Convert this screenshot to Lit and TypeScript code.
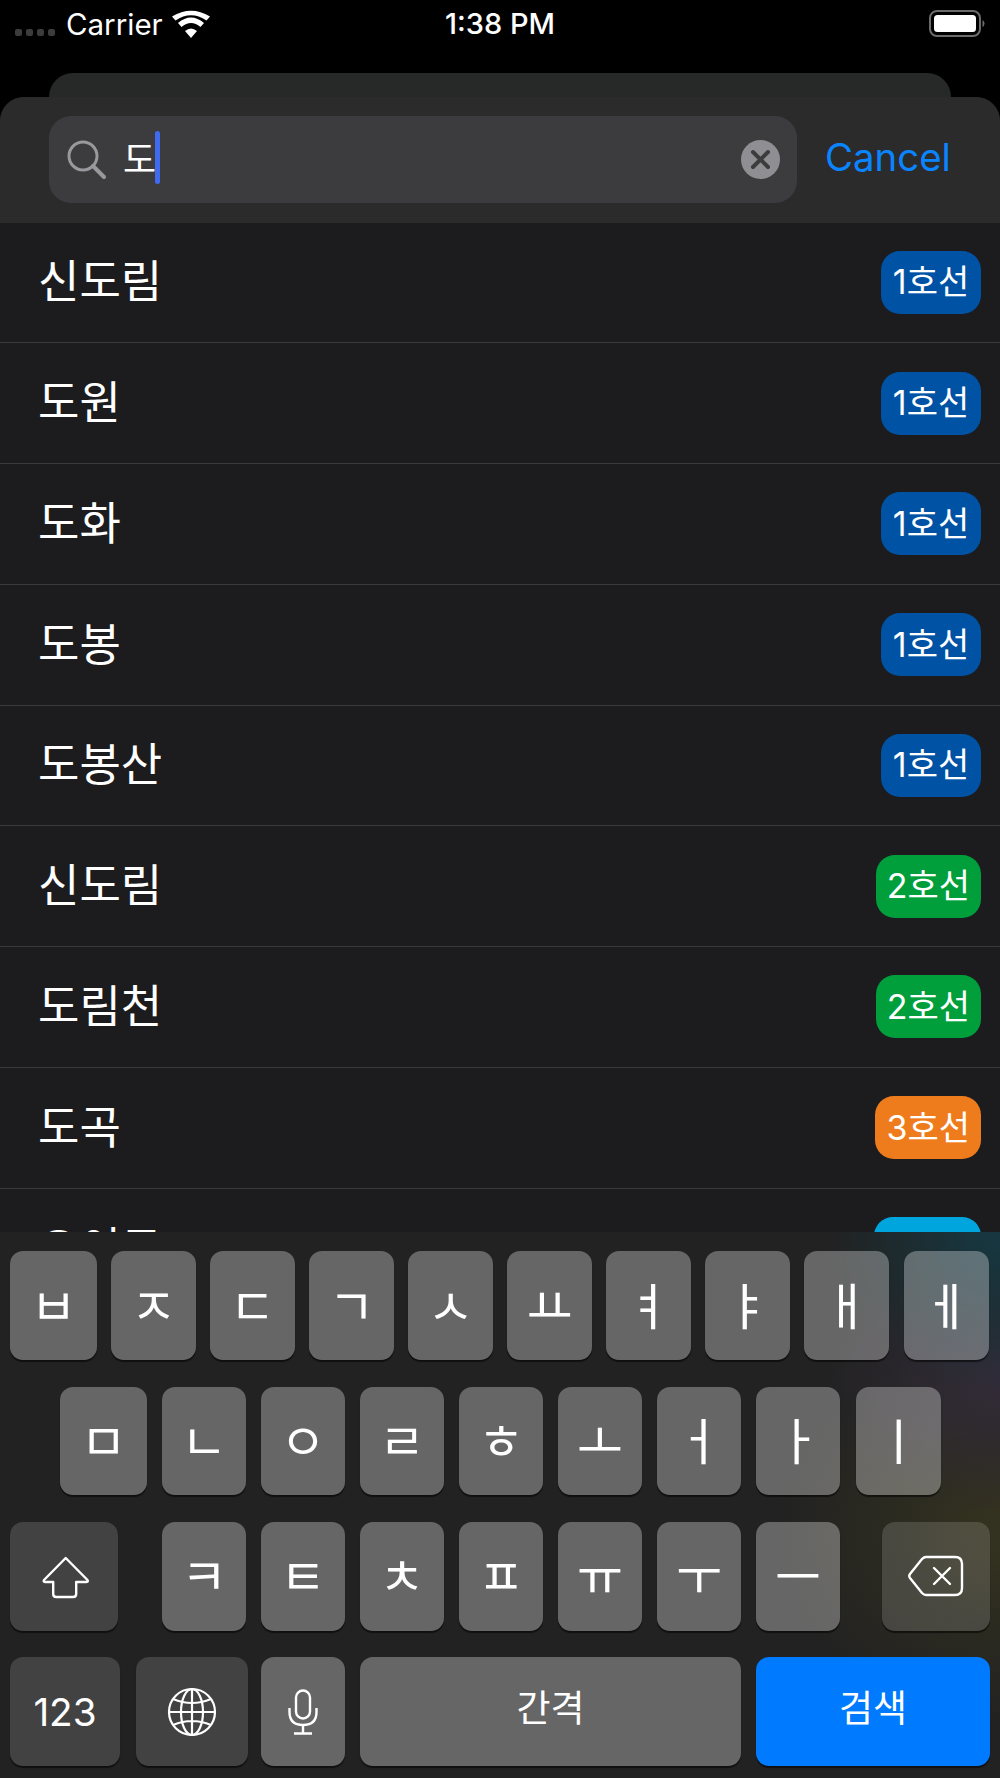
import { LitElement, html, css, svg } from "lit";
import { customElement } from "lit/decorators.js";

type Row = { name: string; line: string; color: string };
const BLUE = "#0052a4", GREEN = "#009f3c", ORANGE = "#ef7c1c", CYAN = "#00a5de";
const rows: Row[] = [
  { name: "신도림", line: "1호선", color: BLUE },
  { name: "도원", line: "1호선", color: BLUE },
  { name: "도화", line: "1호선", color: BLUE },
  { name: "도봉", line: "1호선", color: BLUE },
  { name: "도봉산", line: "1호선", color: BLUE },
  { name: "신도림", line: "2호선", color: GREEN },
  { name: "도림천", line: "2호선", color: GREEN },
  { name: "도곡", line: "3호선", color: ORANGE },
  { name: "오이도", line: "4호선", color: CYAN },
];

const shift = svg`<svg class="ico" width="52" height="48" viewBox="0 0 52 48"><path d="M27.700 6 L49.500 28 Q50.500 30 48.500 30 H38.200 V42 Q38.200 45 35.200 45 H18.200 Q15.200 45 15.200 42 V30 H7 Q5 30 6 28 Z" fill="none" stroke="#fff" stroke-width="2.400" stroke-linejoin="round"/></svg>`;
const del = svg`<svg class="ico" width="56" height="42" viewBox="0 0 56 42"><path d="M18 2 H47 Q54 2 54 9 V33 Q54 40 47 40 H18 Q16 40 14 38 L2 23 Q0.500 21 2 19 L14 4 Q16 2 18 2 Z" fill="none" stroke="#fff" stroke-width="2.400"/><path d="M26 13 L42 29 M42 13 L26 29" stroke="#fff" stroke-width="2.400" stroke-linecap="round"/></svg>`;
const globe = svg`<svg class="ico" width="50" height="50" viewBox="0 0 50 50" fill="none" stroke="#fff" stroke-width="2.200"><circle cx="25" cy="25" r="23"/><ellipse cx="25" cy="25" rx="11" ry="23"/><path d="M25 2 V48 M2 25 H48 M6 12 Q25 20 44 12 M6 38 Q25 30 44 38"/></svg>`;
const mic = svg`<svg class="ico" width="30" height="46" viewBox="0 0 30 46" fill="none" stroke="#fff" stroke-width="2.400"><rect x="8" y="1.500" width="14" height="28" rx="7"/><path d="M1.500 19 V23 Q1.500 36 15 36 Q28.500 36 28.500 23 V19 M15 36 V44 M6 44.500 H24"/></svg>`;

@customElement("app-root")
export class AppRoot extends LitElement {
  static styles = css`
    :host { display: block; width: 1000px; height: 1778px; }
    .page {
      width: 1000px; height: 1778px; background: #000; overflow: hidden;
      position: relative; display: flex; flex-direction: column; color: #fff;
      font-family: Inter, "Noto Sans CJK KR", sans-serif;
    }
    .status { height: 73px; flex: none; position: relative; }
    .carrier { position: absolute; left: 66px; top: 7px; font: 400 29.500px/34px Inter, sans-serif; }
    .time { position: absolute; left: 0; right: 0; top: 7px; text-align: center; font: 500 29px/34px Inter, sans-serif; }
    .dots { position: absolute; left: 15px; top: 29px; display: flex; gap: 4px; }
    .dots i { width: 7px; height: 7px; border-radius: 2px; background: #3c3c3c; display: block; }
    .wifi { position: absolute; left: 172px; top: 10px; }
    .battery { position: absolute; left: 929px; top: 10px; }
    .back { flex: none; height: 24px; margin: 0 49px; background: #272828; border-radius: 24px 24px 0 0; }
    .sheet { flex: 1; display: flex; flex-direction: column; min-height: 0; background: #1c1c1e; border-radius: 24px 24px 0 0; overflow: hidden; }
    .head { flex: none; height: 126px; background: #2b2b2b; display: flex; align-items: flex-start; padding: 19px 49px 0; box-sizing: border-box; position: relative; z-index: 1; }
    .search { width: 748px; height: 87px; flex: none; box-sizing: border-box; background: #3c3c3e; border-radius: 22px; display: flex; align-items: center; padding: 0 17px 0 18px; }
    .field { flex: 1; display: flex; align-items: center; margin: -4px 0 0 16px; font-size: 36px; font-family: "Noto Sans CJK KR", sans-serif; line-height: 53px; }
    .caret { width: 5px; height: 53px; background: #3f6bf0; border-radius: 2.500px; margin-left: -1px; }
    .cancel { margin-left: 28px; margin-top: 18px; font: 400 38.400px/46px Inter, sans-serif; color: #0a84ff; }
    .list { flex: 1; min-height: 0; overflow: hidden; margin-top: -0.700px; }
    .row { height: 120.800px; box-sizing: border-box; border-bottom: 1px solid #3a3a3c; display: flex; align-items: center; justify-content: space-between; padding: 0 19px 0 38px; }
    .name { font: 400 45px/60px "Noto Sans CJK KR", sans-serif; margin-bottom: 6px; }
    .badge { height: 63px; min-width: 100px; padding: 0 11px; box-sizing: border-box; border-radius: 19px; display: flex; align-items: center; justify-content: center; font: 400 34px/40px Inter, "Noto Sans CJK KR", sans-serif; }
    .kb {
      flex: none; height: 546px; box-sizing: border-box; padding: 19.300px 10px 0; display: flex; flex-direction: column; gap: 26.670px;
      position: relative; z-index: 1;
      background:
        radial-gradient(170px 160px at 100% 0%, #17363f 10%, rgba(23,54,63,0) 100%),
        radial-gradient(180px 130px at 100% 150px, #322b38 0%, rgba(50,43,56,0) 100%),
        radial-gradient(220px 190px at 100% 300px, #33311f 10%, rgba(51,49,31,0) 100%),
        #222;
    }
    .kr { display: flex; height: 108.670px; flex: none; gap: 14px; }
    .k { background: rgba(255,255,255,.31); border-radius: 13px; box-shadow: 0 1.500px 1px rgba(0,0,0,.55); display: flex; align-items: center; justify-content: center; font: 400 50px/56px "Noto Sans CJK KR", sans-serif; width: 85px; flex: none; padding-bottom: 6px; box-sizing: border-box; }
    .k.s { background: rgba(255,255,255,.145); }
    .k.w87 { width: 87px; }
    .k.last { margin-left: 1px; }
    .r2, .r3 { gap: 15px; }
    .r2 { padding-left: 50px; }
    .r2 .k, .r3 .k { width: 84px; }
    .r2 .k.w87 { width: 87px; }
    .r2 .k.last { width: 85px; }
    .r3 .k.shift, .r3 .k.del { width: 108px; padding: 0; }
    .r3 .shift { margin-right: 29px; }
    .r3 .del { margin-left: 27px; }
    .r4 { gap: 0; }
    .k.n { width: 110px; padding: 0; font: 400 38.700px/44px Inter, sans-serif; }
    .k.g { width: 112px; padding: 0; margin-left: 16px; }
    .k.m { padding: 0; margin-left: 13px; width: 84px; }
    .k.sp { width: 381px; margin-left: 15px; font-size: 37px; padding-bottom: 12px; }
    .k.go { width: 234px; margin-left: 15px; background: #007aff; font-size: 37px; padding-bottom: 12px; }
    .ico { display: block; }
  `;

  key(t: string, cls = "") {
    return html`<div class="k ${cls}">${t}</div>`;
  }

  render() {
    return html`<div class="page">
      <div class="status">
        <div class="dots"><i></i><i></i><i></i><i></i></div>
        <div class="carrier">Carrier</div>
        <svg class="wifi" width="38" height="28" viewBox="0 0 38 28"><path d="M19 27 L13 20 Q19 15 25 20 Z M9.500 16 L6 12 Q19 1 32 12 L28.500 16 Q19 8 9.500 16 Z M3.500 9.500 L0 5.500 Q19 -6 38 5.500 L34.500 9.500 Q19 -1 3.500 9.500 Z" transform="translate(0 1)" fill="#fff"/></svg>
        <div class="time">1:38 PM</div>
        <svg class="battery" width="58" height="28" viewBox="0 0 58 28"><rect x="1" y="1" width="50" height="25" rx="7" fill="none" stroke="#6b6b6b" stroke-width="2"/><rect x="5" y="5" width="42" height="17" rx="3.500" fill="#fff"/><path d="M53.500 10 Q55.500 11 55.500 13.500 Q55.500 16 53.500 17 Z" fill="#6b6b6b"/></svg>
      </div>
      <div class="back"></div>
      <div class="sheet">
        <div class="head">
          <div class="search">
            <svg width="40" height="40" viewBox="0 0 40 40" fill="none" stroke="#98989d"><circle cx="16" cy="16" r="14" stroke-width="3"/><path d="M26 26 L37 37" stroke-width="4" stroke-linecap="round"/></svg>
            <div class="field">도<span class="caret"></span></div>
            <svg width="39" height="39" viewBox="0 0 39 39"><circle cx="19.500" cy="19.500" r="19.500" fill="#8e8e93"/><path d="M12 12 L27 27 M27 12 L12 27" stroke="#3c3c3e" stroke-width="4" stroke-linecap="round"/></svg>
          </div>
          <div class="cancel">Cancel</div>
        </div>
        <div class="list">
          ${rows.map(r => html`<div class="row"><span class="name">${r.name}</span><span class="badge" style="background:${r.color}">${r.line}</span></div>`)}
        </div>
        <div class="kb">
          <div class="kr">
            ${this.key("ㅂ", "w87")}${[..."ㅈㄷㄱㅅㅛㅕㅑㅐ"].map(c => this.key(c))}${this.key("ㅔ", "last")}
          </div>
          <div class="kr r2">
            ${this.key("ㅁ", "w87")}${[..."ㄴㅇㄹㅎㅗㅓㅏ"].map(c => this.key(c))}${this.key("ㅣ", "last")}
          </div>
          <div class="kr r3">
            <div class="k s shift">${shift}</div>
            ${[..."ㅋㅌㅊㅍㅠㅜㅡ"].map(c => this.key(c))}
            <div class="k s del">${del}</div>
          </div>
          <div class="kr r4">
            <div class="k s n">123</div>
            <div class="k s g">${globe}</div>
            <div class="k m">${mic}</div>
            <div class="k sp">간격</div>
            <div class="k go">검색</div>
          </div>
        </div>
      </div>
    </div>`;
  }
}
